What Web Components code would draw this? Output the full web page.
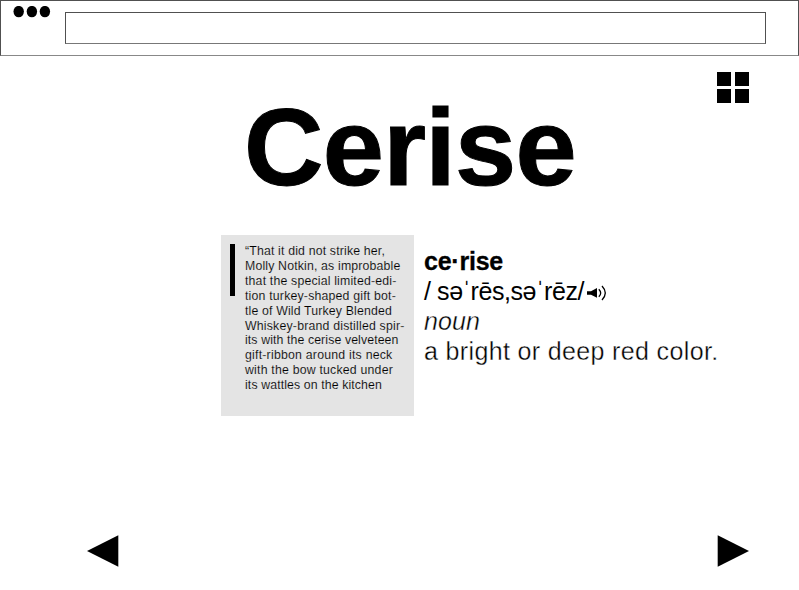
<!DOCTYPE html>
<html lang="en">
<head>
<meta charset="utf-8">
<title>Cerise</title>
<style>
html,body{margin:0;background:#fff}
body{font-family:"Liberation Sans",Arial,sans-serif;color:#000;overflow:hidden}
</style>
</head>
<body>
<word-page></word-page>
<script>
function define(name, html, ready) {
  const t = document.createElement('template');
  t.innerHTML = html;
  customElements.define(name, class extends HTMLElement {
    constructor() {
      super();
      this.attachShadow({mode: 'open'}).append(t.content.cloneNode(true));
    }
    connectedCallback() { if (ready) ready(this); }
  });
}

// One line of type, tracked so that it fills its "measure" in pixels.
define('text-line', `<style>
:host{display:block;white-space:pre}
span{display:inline-block}
</style><span><slot></slot></span>`, el => {
  const span = el.shadowRoot.querySelector('span');
  const goal = parseFloat(el.getAttribute('measure'));
  span.style.letterSpacing = '0px';
  const gap = (goal - span.getBoundingClientRect().width) / [...el.textContent].length;
  span.style.letterSpacing = gap.toFixed(4) + 'px';
});

define('browser-bar', `<style>
:host{display:flex;box-sizing:border-box;height:56px;border:1px solid #505050;border-bottom-color:#888;padding:11px 32px 10px 12px}
svg{display:block;width:38px;height:12px;margin:-6px 14px 0 0;flex:none}
.field{flex:1;box-sizing:border-box;height:32px;border:1px solid #505050;border-bottom-color:#777}
</style>
<svg viewBox="0 0 38 12"><ellipse cx="5.7" cy="5.6" rx="5.2" ry="5.7"/><ellipse cx="18.9" cy="5.6" rx="5.2" ry="5.7"/><ellipse cx="31.9" cy="5.6" rx="5.2" ry="5.7"/></svg>
<div class="field"></div>`);

define('tile-icon', `<style>
:host{display:grid;grid-template:14px 14px/14px 14px;gap:3px 4px}
i{background:#000}
</style><i></i><i></i><i></i><i></i>`);

define('nav-arrow', `<style>
:host{display:block;width:32px;height:32px}
:host([flip]){transform:scaleX(-1)}
svg{display:block}
</style><svg width="32" height="32"><path d="M0 16L31.3 .3V31.7Z"/></svg>`);

define('speaker-icon', `<style>
:host{display:block}svg{display:block}
</style><svg width="20" height="16" viewBox="0 0 20 16"><path d="M0 6.2H4L10 3V12.8L4 9.8H0Z"/><path d="M11.8 4.2Q15.6 8 11.8 11.8M15 1Q21.6 8 15 15" fill="none" stroke="#000" stroke-width="1.3"/></svg>`);

define('quote-card', `<style>
:host{display:flex;box-sizing:border-box;width:193px;height:181px;background:#e4e4e4;padding:9px 0 0 9px}
i{flex:none;width:5px;height:52px;background:#000;margin-right:10px}
div{font-size:12.3px;line-height:14.9px;color:#000;-webkit-text-stroke:.12px #e4e4e4}
</style><i></i><div><slot></slot></div>`);

define('word-entry', `<style>
:host{display:block;font-size:25px;line-height:29.9px;padding-top:12px}
.b{font-weight:bold;-webkit-text-stroke:.3px #000}
.n{font-style:italic}
.l{-webkit-text-stroke:.35px #fff}
.row{display:flex;align-items:center}
speaker-icon{margin:3px 0 0 3px}
</style>
<text-line class="b" measure="79">ce·rise</text-line>
<div class="row"><text-line measure="160">/ səˈrēs,səˈrēz/</text-line><speaker-icon></speaker-icon></div>
<text-line class="n l" measure="56">noun</text-line>
<text-line class="l" measure="294.5">a bright or deep red color.</text-line>`);

define('word-page', `<style>
:host{display:flex;flex-direction:column;width:799px;height:590px}
.top{display:flex;justify-content:flex-end;padding:16px 50px 0 0;height:31px}
h1{margin:-6px 0 0 244px;font-size:110px;line-height:100px;font-weight:bold;-webkit-text-stroke:1px #000}
.main{display:flex;margin:38px 0 0 221px;gap:10px}
nav{display:flex;justify-content:space-between;margin:auto 50px 23px 87px}
</style>
<browser-bar></browser-bar>
<div class="top"><tile-icon></tile-icon></div>
<h1><text-line measure="332">Cerise</text-line></h1>
<div class="main">
<quote-card>
<text-line measure="140">“That it did not strike her,</text-line>
<text-line measure="155.5">Molly Notkin, as improbable</text-line>
<text-line measure="151.5">that the special limited-edi-</text-line>
<text-line measure="151">tion turkey-shaped gift bot-</text-line>
<text-line measure="147">tle of Wild Turkey Blended</text-line>
<text-line measure="159.5">Whiskey-brand distilled spir-</text-line>
<text-line measure="153.5">its with the cerise velveteen</text-line>
<text-line measure="147.5">gift-ribbon around its neck</text-line>
<text-line measure="148">with the bow tucked under</text-line>
<text-line measure="137">its wattles on the kitchen</text-line>
</quote-card>
<word-entry></word-entry>
</div>
<nav><nav-arrow></nav-arrow><nav-arrow flip></nav-arrow></nav>`);
</script>
</body>
</html>
